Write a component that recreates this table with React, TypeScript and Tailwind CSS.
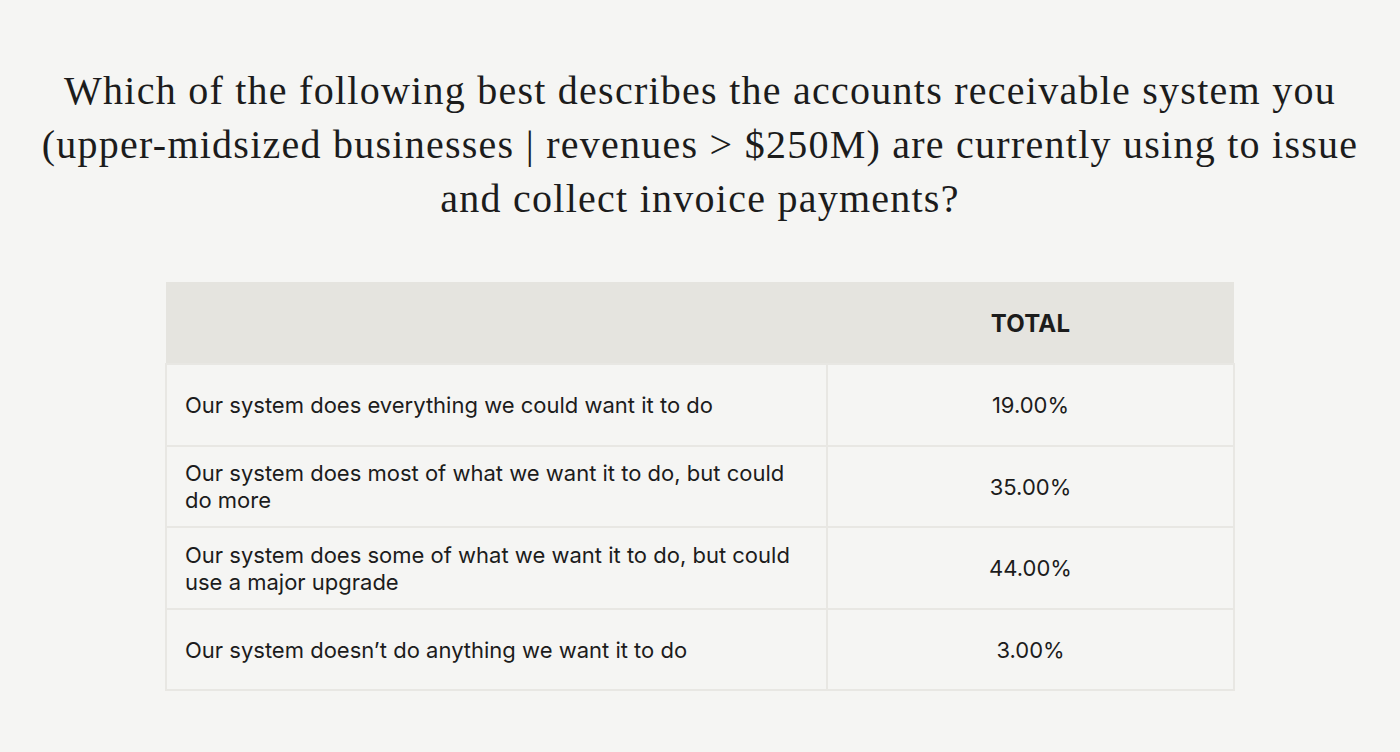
const ROWS = [
  { label: "Our system does everything we could want it to do", value: "19.00%" },
  { label: "Our system does most of what we want it to do, but could do more", value: "35.00%" },
  { label: "Our system does some of what we want it to do, but could use a major upgrade", value: "44.00%" },
  { label: "Our system doesn\u2019t do anything we want it to do", value: "3.00%" },
];

export default function App() {
  return (
    <div className="min-h-[752px] w-full bg-[#f5f5f3] pt-[64px]">
      <h1
        className="mx-auto text-center text-[40px] leading-[54px] tracking-[1.25px] text-[#1c1c1c]"
        style={{ fontFamily: '"Liberation Serif", "DejaVu Serif", serif' }}
      >
        Which of the following best describes the accounts receivable system you
        <br />
        (upper-midsized businesses | revenues &gt; $250M) are currently using to issue
        <br />
        and collect invoice payments?
      </h1>

      <table
        className="mx-auto mt-[56px] w-[1070px] border-collapse text-[22px] text-[#1c1c1c]"
        style={{ fontFamily: 'Inter, "Liberation Sans", sans-serif' }}
      >
        <thead>
          <tr className="h-[82px] bg-[#e5e4df]">
            <th className="w-[661px]" />
            <th className="pt-[2px] text-center text-[24px] font-bold tracking-[0.2px]">TOTAL</th>
          </tr>
        </thead>
        <tbody>
          {ROWS.map((r) => (
            <tr key={r.value} className="h-[81.5px]">
              <td className="border-2 border-[#e8e7e3] px-[18px] pt-[10px] pb-2 leading-[27px]">
                <div className="max-w-[615px]">{r.label}</div>
              </td>
              <td className="border-2 border-[#e8e7e3] pt-[2px] text-center">{r.value}</td>
            </tr>
          ))}
        </tbody>
      </table>
    </div>
  );
}
